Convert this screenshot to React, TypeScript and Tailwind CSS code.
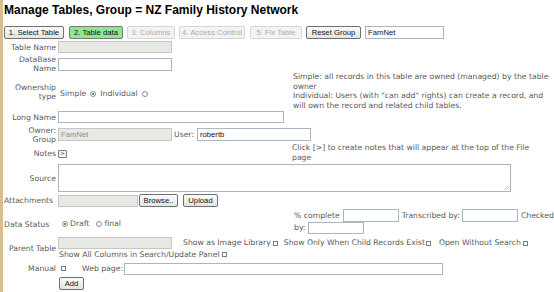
import React from "react";

// verdana-ish text for labels, arial for controls
const txt = "font-['DejaVu_Sans',Verdana,sans-serif] text-[7.7px] text-[#5a5a5a] whitespace-nowrap";
const ctl = "font-['Liberation_Sans',Arial,sans-serif] text-[7.7px]";

function Btn({ children, w, tone = "plain" }: { children: React.ReactNode; w: string; tone?: "plain" | "green" | "off" }) {
  const look =
    tone === "green"
      ? "bg-[#8fe88f] border-[#7a7a7a] text-[#111]"
      : tone === "off"
      ? "bg-[#f3f3f1] border-[#d6d6d6] text-[#acacac]"
      : "bg-linear-to-b from-[#fbfbfb] to-[#e4e4e4] border-[#707070] text-[#111]";
  return (
    <button className={`${ctl} ${w} h-[13px] shrink-0 border rounded-[2px] leading-[11px] text-center whitespace-nowrap ${look}`}>
      {children}
    </button>
  );
}

function Field({ w, h = "h-[12px]", off, value }: { w: string; h?: string; off?: boolean; value?: string }) {
  return (
    <div
      className={`${ctl} ${w} ${h} shrink-0 border px-[2px] flex items-center ${
        off ? "bg-[#e8e8e4] border-[#c6c6c6] text-[#8e8e8e]" : "bg-white border-[#a9b6c4] text-[#111]"
      }`}
    >
      {value}
    </div>
  );
}

function Radio({ on, className = "" }: { on?: boolean; className?: string }) {
  return (
    <span className={`flex w-[6px] h-[6px] rounded-full border border-[#8b8b8b] bg-white items-center justify-center shrink-0 ${className}`}>
      {on && <span className="w-[2px] h-[2px] rounded-full bg-[#4d5d6d]" />}
    </span>
  );
}

function Check({ className = "" }: { className?: string }) {
  return <span className={`block w-[5px] h-[5px] border border-[#7d7d7d] bg-white shrink-0 ${className}`} />;
}

function Label({ children, left }: { children: React.ReactNode; left?: boolean }) {
  return <div className={`${txt} w-[52px] shrink-0 leading-[9px] ${left ? "text-left" : "text-right"}`}>{children}</div>;
}

export default function App() {
  return (
    <div className="w-[554px] h-[292px] overflow-hidden bg-white border-l-[3px] border-[#d9bd90] pl-[1px] flex flex-col">
      <div className="h-[20px] flex items-center font-['Liberation_Sans',Arial,sans-serif] text-[12px] font-bold text-black whitespace-nowrap">
        Manage Tables, Group = NZ Family History Network
      </div>

      <div className="mt-[6px] h-[13px] flex items-center">
        <Btn w="w-[60px]">1. Select Table</Btn>
        <div className="ml-[5px] flex"><Btn w="w-[54px]" tone="green">2. Table data</Btn></div>
        <div className="ml-[4px] flex"><Btn w="w-[48px]" tone="off">3. Columns</Btn></div>
        <div className="ml-[4px] flex"><Btn w="w-[66px]" tone="off">4. Access Control</Btn></div>
        <div className="ml-[5px] flex"><Btn w="w-[52px]" tone="off">5. Fix Table</Btn></div>
        <div className="ml-[4px] flex"><Btn w="w-[55px]">Reset Group</Btn></div>
        <div className="ml-[4px] flex"><Field w="w-[79px]" h="h-[13px]" value="FamNet" /></div>
      </div>

      <div className="mt-[2px] h-[12px] flex items-center">
        <Label>Table Name</Label>
        <div className="ml-[2px] flex"><Field w="w-[114px]" off /></div>
      </div>

      <div className="mt-[3px] h-[16px] flex items-center">
        <Label>DataBase<br />Name</Label>
        <div className="ml-[2px] flex"><Field w="w-[114px]" h="h-[13px]" /></div>
      </div>

      <div className="h-[37px] flex">
        <div className="w-[289px] shrink-0 flex items-end pb-[8px]">
          <Label>Ownership<br />type</Label>
          <div className={`${txt} ml-[4px] flex items-center gap-[4px] pb-[1px]`}>
            <span>Simple</span>
            <Radio on />
            <span>Individual</span>
            <Radio />
          </div>
        </div>
        <div className={`${txt} leading-[9.5px]`}>
          Simple: all records in this table are owned (managed) by the table
          <br />owner
          <br />Individual: Users (with "can add" rights) can create a record, and
          <br />will own the record and related child tables.
        </div>
      </div>

      <div className="mt-[1px] h-[14px] flex items-center">
        <Label>Long Name</Label>
        <div className="ml-[2px] flex"><Field w="w-[226px]" /></div>
      </div>

      <div className="mt-[2px] h-[17px] flex items-center">
        <Label>Owner:<br />Group</Label>
        <div className="ml-[2px] flex"><Field w="w-[114px]" h="h-[13px]" off value="FamNet" /></div>
        <span className={`${txt} ml-[2px]`}>User:</span>
        <div className="ml-[3px] flex"><Field w="w-[114px]" h="h-[13px]" value="robertb" /></div>
      </div>

      <div className="h-[21px] flex">
        <div className="w-[288px] shrink-0 flex items-center">
          <Label>Notes</Label>
          <div className="ml-[2px] w-[9px] h-[8px] border border-[#6f7f90] rounded-[1px] bg-[#f4f4f4] flex items-center justify-center text-[5px] leading-none text-[#333] font-['DejaVu_Sans',sans-serif]">
            &gt;
          </div>
        </div>
        <div className={`${txt} leading-[9.5px]`}>
          Click [&gt;] to create notes that will appear at the top of the File
          <br />page
        </div>
      </div>

      <div className="h-[28px] flex items-center">
        <Label>Source</Label>
        <div className="ml-[2px] w-[453px] h-[28px] border border-[#a9b6c4] bg-white relative">
          <svg className="absolute right-[1px] bottom-[1px]" width="6" height="6" viewBox="0 0 6 6">
            <path d="M5.5 1.5L1.5 5.5M5.5 3.5L3.5 5.5" stroke="#b5b5b5" strokeWidth="0.8" />
          </svg>
        </div>
      </div>

      <div className="mt-[2px] h-[13px] flex items-center">
        <div className={`${txt} w-[54px] shrink-0`}>Attachments</div>
        <Field w="w-[80px]" h="h-[12px]" off />
        <div className="ml-[1px] flex"><Btn w="w-[39px]">Browse..</Btn></div>
        <div className="ml-[5px] flex"><Btn w="w-[35px]">Upload</Btn></div>
      </div>

      <div className="mt-[2px] h-[26px] flex">
        <div className="w-[290px] shrink-0 flex items-center pt-[4px]">
          <Label left>Data Status</Label>
          <div className={`${txt} ml-[6px] flex items-center`}>
            <Radio on />
            <span className="ml-[2px]">Draft</span>
            <Radio className="ml-[7px]" />
            <span className="ml-[2px]">final</span>
          </div>
        </div>
        <div className="flex flex-col">
          <div className="h-[13px] flex items-center">
            <span className={txt}>% complete</span>
            <div className="ml-[3px] flex"><Field w="w-[56px]" h="h-[13px]" /></div>
            <span className={`${txt} ml-[3px]`}>Transcribed by:</span>
            <div className="ml-[2px] flex"><Field w="w-[56px]" h="h-[13px]" /></div>
            <span className={`${txt} ml-[3px]`}>Checked</span>
          </div>
          <div className="h-[12px] flex items-center">
            <span className={txt}>by:</span>
            <div className="ml-[3px] flex"><Field w="w-[56px]" h="h-[12px]" /></div>
          </div>
        </div>
      </div>

      <div className="mt-[2px] h-[23px] flex items-center">
        <Label>Parent Table</Label>
        <div className="ml-[2px] flex flex-col">
          <div className="h-[12px] flex items-center">
            <Field w="w-[114px]" off />
            <span className={`${txt} ml-[11px]`}>Show as Image Library</span>
            <Check className="ml-[2px]" />
            <span className={`${txt} ml-[6px]`}>Show Only When Child Records Exist</span>
            <Check className="ml-[1px]" />
            <span className={`${txt} ml-[8px]`}>Open Without Search</span>
            <Check className="ml-[2px]" />
          </div>
          <div className="h-[11px] flex items-center">
            <span className={`${txt} ml-[1px]`}>Show All Columns in Search/Update Panel</span>
            <Check className="ml-[2px]" />
          </div>
        </div>
      </div>

      <div className="mt-[2px] h-[13px] flex items-center">
        <Label>Manual</Label>
        <Check className="ml-[5px]" />
        <span className={`${txt} ml-[16px]`}>Web page:</span>
        <div className="ml-[1px] flex"><Field w="w-[319px]" /></div>
      </div>

      <div className="mt-[2px] h-[13px] flex items-center">
        <div className="ml-[55px] flex"><Btn w="w-[25px]">Add</Btn></div>
      </div>
    </div>
  );
}
